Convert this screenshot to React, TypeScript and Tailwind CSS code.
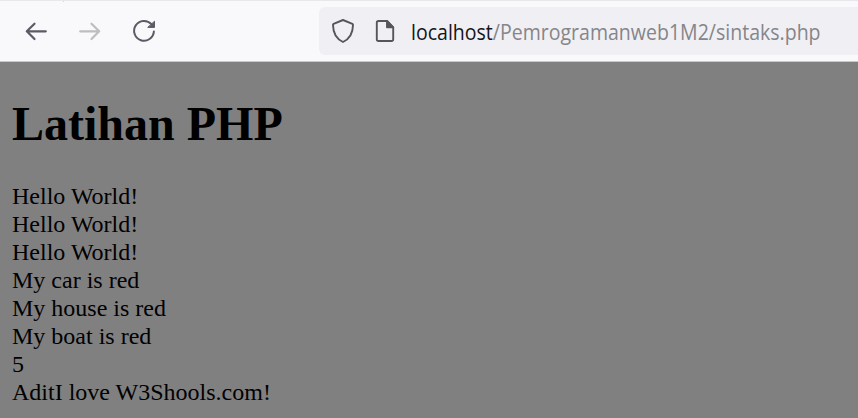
const lines = [
  'Hello World!',
  'Hello World!',
  'Hello World!',
  'My car is red',
  'My house is red',
  'My boat is red',
  '5',
  'AditI love W3Shools.com!',
];

function Navigation() {
  return (
    <svg width="319" height="60" viewBox="0 1 319 60" fill="none" strokeWidth="2.2" strokeLinecap="round" strokeLinejoin="round" className="shrink-0">
      <path d="M63.5 1V1.5" stroke="#b5b5b9" strokeWidth="1" strokeLinecap="butt" />
      <path d="M45.8 31.3H27M34.5 23.7L26.8 31.3L34.5 39" stroke="#5b5b66" />
      <path d="M80.2 31.3H99M91.5 23.7L99.2 31.3L91.5 39" stroke="#bdbdc2" />
      <path d="M151.4 24.2A9.9 9.9 0 1 0 153.9 31.4" stroke="#5b5b66" strokeWidth="2" />
      <path d="M154.5 21.6V27.4H148.1Z" fill="#5b5b66" stroke="#5b5b66" strokeWidth="1" />
    </svg>
  );
}

export default function App() {
  return (
    <div className="h-[418px] w-full overflow-hidden bg-[#808080] text-black">
      <header className="flex h-[62px] border-t border-b border-t-[#e8e8ec] border-b-[#c7cac7] bg-[#f9f9fb]">
        <Navigation />
        <div className="mt-[6px] flex h-12 flex-1 items-center rounded-l-md bg-[#f0f0f4]">
          <svg width="92" height="48" viewBox="319 7 92 48" fill="none" stroke="#55555c" strokeWidth="1.9" strokeLinejoin="round" className="shrink-0">
            <path d="M343 20L352.4 23.8Q353.1 24.1 353 25C352.9 33 350.5 38.5 343 42C335.5 38.5 333.1 33 333 25Q332.9 24.1 333.6 23.8Z" />
            <path d="M387 21H378.5Q376.8 21 376.8 22.8V39.2Q376.8 41 378.5 41H391.5Q393.2 41 393.2 39.2V27.3Z" />
            <path d="M387 21V27.3H393.2Z" fill="#55555c" />
          </svg>
          <div className="origin-left scale-x-[0.93] pt-[2px] font-['Open_Sans',sans-serif] text-[21px] leading-[48px] whitespace-nowrap text-[#85858a]">
            <span className="text-[#15141a]">localhost</span>
            <span>/Pemrogramanweb1M2/sintaks.php</span>
          </div>
        </div>
      </header>
      <main className="px-3 font-['Liberation_Serif',serif] text-2xl leading-7">
        <h1 className="pt-[34px] pb-[30px] text-5xl leading-[56px] font-bold">Latihan PHP</h1>
        {lines.map((line, index) => (
          <p key={index}>{line}</p>
        ))}
      </main>
    </div>
  );
}
